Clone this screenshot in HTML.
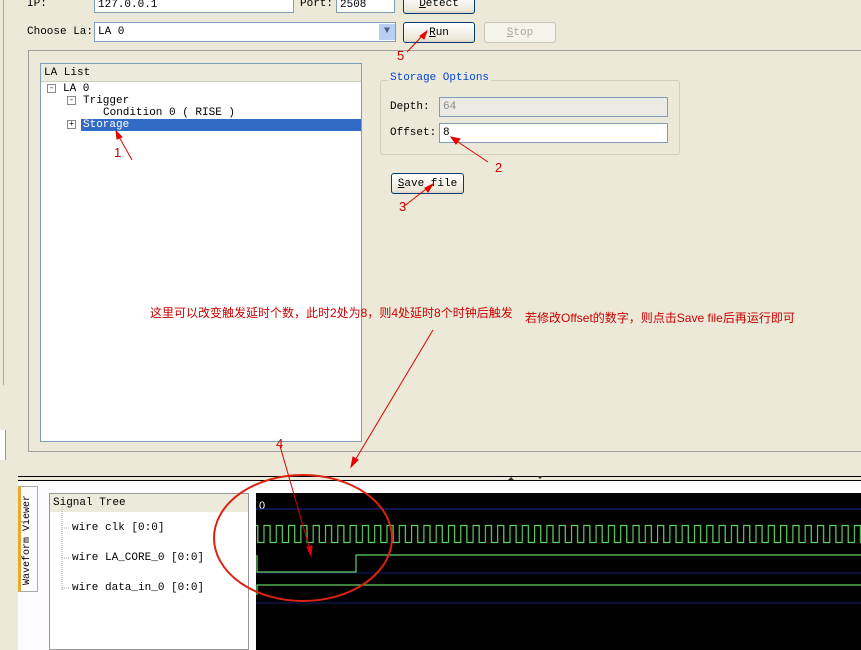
<!DOCTYPE html>
<html><head><meta charset="utf-8"><style>
body{margin:0;width:861px;height:650px;overflow:hidden;background:#ece9d8;position:relative;font-family:"Liberation Mono","Noto Sans CJK SC",monospace;font-size:11px;color:#000}
.a{position:absolute}
.inp{position:absolute;background:#fff;border:1px solid #7f9db9;box-sizing:border-box;padding:1px 3px;font-size:11px;line-height:15px}
.btn{position:absolute;border:1px solid #003c74;border-radius:3px;background:linear-gradient(#fff,#ece9d8 85%,#d6d0c5);box-sizing:border-box;text-align:center;font-size:11px;line-height:17px}
.red{color:#c00;font-family:"Liberation Sans","Noto Sans CJK SC",sans-serif}
</style></head><body>
<div class="a" style="left:0;top:0;width:3px;height:385px;border-right:1px solid #aaa"></div>
<div class="a" style="left:0;top:430px;width:5px;height:30px;background:#fff;border-right:1px solid #999"></div>
<div class="a" style="left:27px;top:-2px">IP:</div>
<div class="inp" style="left:94px;top:-4px;width:200px;height:17px">127.0.0.1</div>
<div class="a" style="left:300px;top:-2px">Port:</div>
<div class="inp" style="left:336px;top:-4px;width:59px;height:17px">2508</div>
<div class="btn" style="left:403px;top:-5px;width:72px;height:19px"><u>D</u>etect</div>
<div class="a" style="left:27px;top:26px">Choose La:</div>
<div class="inp" style="left:94px;top:22px;width:302px;height:20px;line-height:17px">LA 0</div>
<div class="a" style="left:379px;top:24px;width:16px;height:16px;background:#b9cdf5;color:#4d6185;text-align:center;font-size:10px;line-height:16px">&#9660;</div>
<div class="btn" style="left:403px;top:22px;width:72px;height:21px;line-height:20px"><u>R</u>un</div>
<div class="btn" style="left:484px;top:22px;width:72px;height:21px;line-height:20px;border-color:#c9c7ba;color:#aca899;background:#f5f4ea"><u>S</u>top</div>
<div class="a" style="left:28px;top:50px;width:840px;height:402px;border:1px solid #a0a0a0;border-right:none;box-sizing:border-box"></div>
<div class="a" style="left:40px;top:63px;width:322px;height:379px;background:#fff;border:1px solid #7f9db9;box-sizing:border-box"></div>
<div class="a" style="left:41px;top:64px;width:320px;height:18px;background:#ebeadb;border-bottom:1px solid #d0cfc0;line-height:18px;padding-left:3px;box-sizing:border-box">LA List</div>
<div class="a" style="left:47px;top:84px;width:7px;height:7px;border:1px solid #888;background:#fff;font-size:8px;line-height:7px;text-align:center">-</div>
<div class="a" style="left:63px;top:83px">LA 0</div>
<div class="a" style="left:67px;top:96px;width:7px;height:7px;border:1px solid #888;background:#fff;font-size:8px;line-height:7px;text-align:center">-</div>
<div class="a" style="left:83px;top:95px">Trigger</div>
<div class="a" style="left:103px;top:107px">Condition 0 ( RISE )</div>
<div class="a" style="left:81px;top:119px;width:280px;height:12px;background:#316ac5"></div>
<div class="a" style="left:67px;top:120px;width:7px;height:7px;border:1px solid #888;background:#fff;font-size:8px;line-height:7px;text-align:center">+</div>
<div class="a" style="left:83px;top:119px;color:#fff">Storage</div>
<div class="a" style="left:380px;top:80px;width:300px;height:75px;border:1px solid #d0d0bf;border-radius:3px;box-sizing:border-box"></div>
<div class="a" style="left:388px;top:72px;background:#ece9d8;color:#0046d5;padding:0 2px">Storage Options</div>
<div class="a" style="left:390px;top:101px">Depth:</div>
<div class="inp" style="left:439px;top:97px;width:229px;height:20px;background:#ebebe4;color:#888;line-height:17px">64</div>
<div class="a" style="left:390px;top:127px">Offset:</div>
<div class="inp" style="left:439px;top:123px;width:229px;height:20px;line-height:17px">8</div>
<div class="btn" style="left:391px;top:173px;width:73px;height:21px;line-height:20px"><u>S</u>ave file</div>
<div class="a red" style="left:150px;top:304px;font-size:12px">这里可以改变触发延时个数，此时2处为8，则4处延时8个时钟后触发</div>
<div class="a red" style="left:525px;top:309px;font-size:12px">若修改Offset的数字，则点击Save file后再运行即可</div>
<div class="a red" style="left:114px;top:145px;font-size:13px">1</div>
<div class="a red" style="left:495px;top:160px;font-size:13px">2</div>
<div class="a red" style="left:399px;top:199px;font-size:13px">3</div>
<div class="a red" style="left:276px;top:436px;font-size:13px">4</div>
<div class="a red" style="left:397px;top:48px;font-size:13px">5</div>
<div class="a" style="left:18px;top:476px;width:843px;height:1px;background:#000"></div>
<div class="a" style="left:18px;top:480px;width:843px;height:1px;background:#000"></div>
<div class="a" style="left:18px;top:481px;width:843px;height:169px;background:#fcfcfe"></div>
<div class="a" style="left:18px;top:486px;width:20px;height:106px;background:#fcfcfe;border:1px solid #aaa;border-left:3px solid #e6a82d;box-sizing:border-box"></div>
<div class="a" style="left:22px;top:490px;writing-mode:vertical-rl;transform:rotate(180deg);font-size:10px;height:95px">Waveform Viewer</div>
<div class="a" style="left:49px;top:493px;width:200px;height:157px;background:#fff;border:1px solid #999;box-sizing:border-box"></div>
<div class="a" style="left:50px;top:494px;width:198px;height:18px;background:#ebeadb;line-height:18px;padding-left:3px;box-sizing:border-box">Signal Tree</div>
<div class="a" style="left:72px;top:522px">wire  clk [0:0]</div>
<div class="a" style="left:72px;top:552px">wire  LA_CORE_0 [0:0]</div>
<div class="a" style="left:72px;top:582px">wire  data_in_0 [0:0]</div>
<svg class="a" style="left:0;top:0" width="861" height="650">
<defs><pattern id="ck" x="257" y="0" width="12" height="650" patternUnits="userSpaceOnUse" patternTransform="scale(1.025 1)">
<path d="M0 542.5H0.5V525.5H6.5V542.5H12" fill="none" stroke="#5fd35f" stroke-width="1.2"/></pattern></defs>
<path d="M62 507V590M62 528H70M62 558H70M62 588H70" stroke="#aaa" stroke-dasharray="1,1" fill="none"/>
<rect x="256" y="493" width="605" height="157" fill="#000"/>
<text x="259" y="509" fill="#fff" font-size="11" font-family="Liberation Sans">0</text>
<line x1="256" y1="509" x2="861" y2="509" stroke="#1c2a9a"/>
<line x1="256" y1="573" x2="861" y2="573" stroke="#15206a"/>
<line x1="256" y1="603" x2="861" y2="603" stroke="#15206a"/>
<rect x="256" y="520" width="605" height="25" fill="url(#ck)"/>
<path d="M257 555V572H356V555H861" fill="none" stroke="#5fd35f" stroke-width="1.2"/>
<path d="M257 595V585H861" fill="none" stroke="#5fd35f" stroke-width="1.2"/>
<ellipse cx="303" cy="538" rx="89" ry="63" fill="none" stroke="#d21" stroke-width="2"/>
<g stroke="#d00" stroke-width="1" fill="#e00">
<path d="M132 160L118 135" fill="none"/><path d="M116 131l6 6-5 2z"/>
<path d="M488 162L455 140" fill="none"/><path d="M451 137l9 2-4 5z"/>
<path d="M403 207L430 186" fill="none"/><path d="M433 184l-5 8-3-4z"/>
<path d="M407 52L424 34" fill="none"/><path d="M427 31l-3 8-4-3z"/>
<path d="M280 446L310 550" fill="none"/><path d="M311 556l-4-9 5-1z"/>
<path d="M433 330L354 462" fill="none"/><path d="M351 467l2-10 5 3z"/>
</g>
<path d="M508 480l3-3 3 3zM537 476l3 3 3-3z" fill="#333"/>
</svg>
</body></html>
